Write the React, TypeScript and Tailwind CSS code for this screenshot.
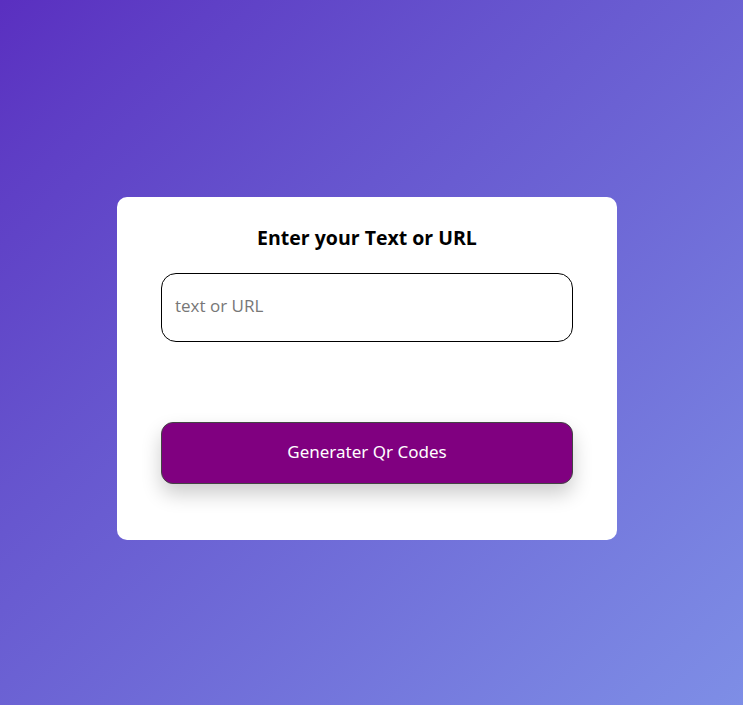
import React from 'react';

export default function App() {
  return (
    <div className="min-h-screen w-full bg-gradient-to-br from-[#5a2fc0] to-[#7e8ee6] pt-[197px] pl-[117px]">
      <div className="w-[500px] bg-white rounded-[10px] px-[44px] pt-[26px] pb-[56px] flex flex-col">
        <h1 className="text-center text-[19.5px] leading-[30px] font-bold text-black font-['Open_Sans',sans-serif]">
          Enter your Text or URL
        </h1>
        <input
          type="text"
          placeholder="text or URL"
          className="mt-[20px] h-[69px] w-full rounded-[15px] border border-black px-[13px] pb-[4px] text-[17px] font-['Open_Sans',sans-serif] placeholder:text-[#777] outline-none"
        />
        <button className="mt-[80px] h-[62px] w-full rounded-[12px] border border-[#444] bg-[#800080] pb-[2px] text-white text-[17px] font-['Noto_Sans',sans-serif] shadow-[0_10px_20px_rgba(0,0,0,0.2)]">
          Generater Qr Codes
        </button>
      </div>
    </div>
  );
}
